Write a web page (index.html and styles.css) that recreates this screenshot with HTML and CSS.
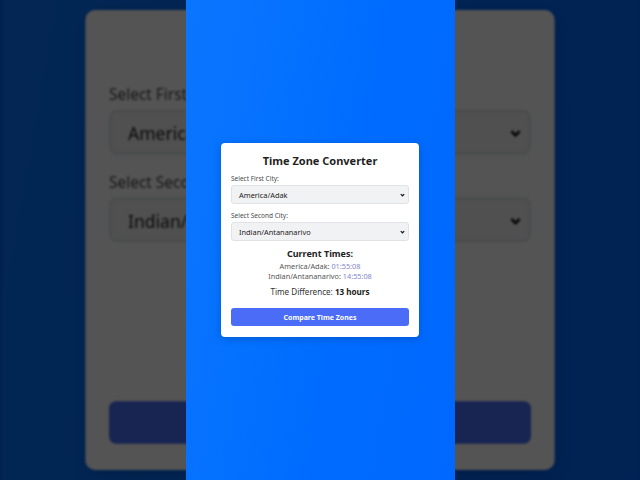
FILE: index.html
```html
<!DOCTYPE html>
<html lang="en">
<head>
<meta charset="utf-8">
<title>Time Zone Converter</title>
<link rel="stylesheet" href="styles.css">
</head>
<body>
<div class="stage">
  <div class="layer back" aria-hidden="true">
    <div class="frame">
      <div class="card">
        <h1 class="title covered">Time Zone Converter</h1>
        <div class="field">
          <div class="label">Select First<span class="covered"> City:</span></div>
          <div class="select"><span>America<span class="covered">/Adak</span></span><svg class="chev" viewBox="0 0 10 6"><polyline points="1.5,1.2 5,4.6 8.5,1.2"/></svg></div>
        </div>
        <div class="field">
          <div class="label">Select Seco<span class="covered">nd City:</span></div>
          <div class="select"><span>Indian/<span class="covered">Antananarivo</span></span><svg class="chev" viewBox="0 0 10 6"><polyline points="1.5,1.2 5,4.6 8.5,1.2"/></svg></div>
        </div>
        <div class="results covered">
          <div class="res-title">Current Times:</div>
          <div class="time-row">America/Adak: <span class="clock">01:55:08</span></div>
          <div class="time-row">Indian/Antananarivo: <span class="clock">14:55:08</span></div>
          <div class="diff">Time Difference: <b>13 hours</b></div>
        </div>
        <div class="button"><span class="covered">Compare Time Zones</span></div>
      </div>
    </div>
  </div>
  <div class="layer front">
    <div class="frame">
      <div class="card">
        <h1 class="title">Time Zone Converter</h1>
        <div class="field">
          <div class="label">Select First City:</div>
          <div class="select"><span>America/Adak</span><svg class="chev" viewBox="0 0 10 6"><polyline points="1.5,1.2 5,4.6 8.5,1.2"/></svg></div>
        </div>
        <div class="field">
          <div class="label">Select Second City:</div>
          <div class="select"><span>Indian/Antananarivo</span><svg class="chev" viewBox="0 0 10 6"><polyline points="1.5,1.2 5,4.6 8.5,1.2"/></svg></div>
        </div>
        <div class="results">
          <div class="res-title">Current Times:</div>
          <div class="time-row">America/Adak: <span class="clock">01:55:08</span></div>
          <div class="time-row">Indian/Antananarivo: <span class="clock">14:55:08</span></div>
          <div class="diff">Time Difference: <b>13 hours</b></div>
        </div>
        <div class="button">Compare Time Zones</div>
      </div>
    </div>
  </div>
</div>
</body>
</html>
```

FILE: styles.css
```css
* { box-sizing: border-box; }
html, body { margin: 0; padding: 0; }
body {
  width: 640px;
  height: 480px;
  overflow: hidden;
  font-family: "Noto Sans", "Open Sans", sans-serif;
  background: #00214f;
}
.stage {
  display: grid;
  width: 640px;
  height: 480px;
  overflow: hidden;
  background: #00214f;
}
.layer {
  grid-area: 1 / 1;
  display: flex;
  justify-content: center;
}
.back {
  z-index: 0;
  transform: scale(2.37);
  filter: brightness(0.33) blur(0.4px);
}
.front {
  z-index: 1;
}
.covered { visibility: hidden; }
.frame {
  width: 269px;
  height: 480px;
  background: linear-gradient(100deg, #0a76ff 0%, #006cff 60%, #0068ff 100%);
  display: flex;
  align-items: center;
  justify-content: center;
}
.card {
  width: 198px;
  height: 194px;
  background: #ffffff;
  border-radius: 4px;
  box-shadow: 0 2px 8px rgba(0, 0, 0, 0.18);
  padding: 10px 10px 0 10px;
  display: flex;
  flex-direction: column;
  color: #333;
}
.title {
  margin: 0 0 5px 0;
  font-size: 11px;
  line-height: 16px;
  font-weight: 700;
  text-align: center;
  color: #1f1f1f;
}
.field {
  display: flex;
  flex-direction: column;
  margin-bottom: 7px;
}
.label {
  font-size: 6.5px;
  line-height: 9px;
  color: #4a4a4a;
  margin-bottom: 2px;
}
.select {
  height: 19px;
  background: #f1f2f4;
  border: 1px solid #e0e2e6;
  border-radius: 3px;
  display: flex;
  align-items: center;
  justify-content: space-between;
  padding: 0 3px 0 7px;
  font-size: 7.4px;
  color: #222;
}
.chev {
  width: 5px;
  height: 4px;
  fill: none;
  stroke: #1a1a1a;
  stroke-width: 2.4;
}
.results {
  display: flex;
  flex-direction: column;
  align-items: center;
  margin-top: -1px;
}
.res-title {
  font-size: 9px;
  font-weight: 700;
  line-height: 14px;
  color: #222;
}
.time-row {
  font-size: 7.3px;
  line-height: 10px;
  color: #555;
}
.clock { color: #7f86cc; }
.diff {
  margin-top: 5px;
  font-size: 8.1px;
  line-height: 12px;
  color: #333;
}
.diff b { color: #222; }
.button {
  margin-top: 10px;
  height: 18px;
  background: #4a6cf7;
  border-radius: 3px;
  color: #fff;
  font-size: 7px;
  font-weight: 700;
  display: flex;
  align-items: center;
  justify-content: center;
}
```
